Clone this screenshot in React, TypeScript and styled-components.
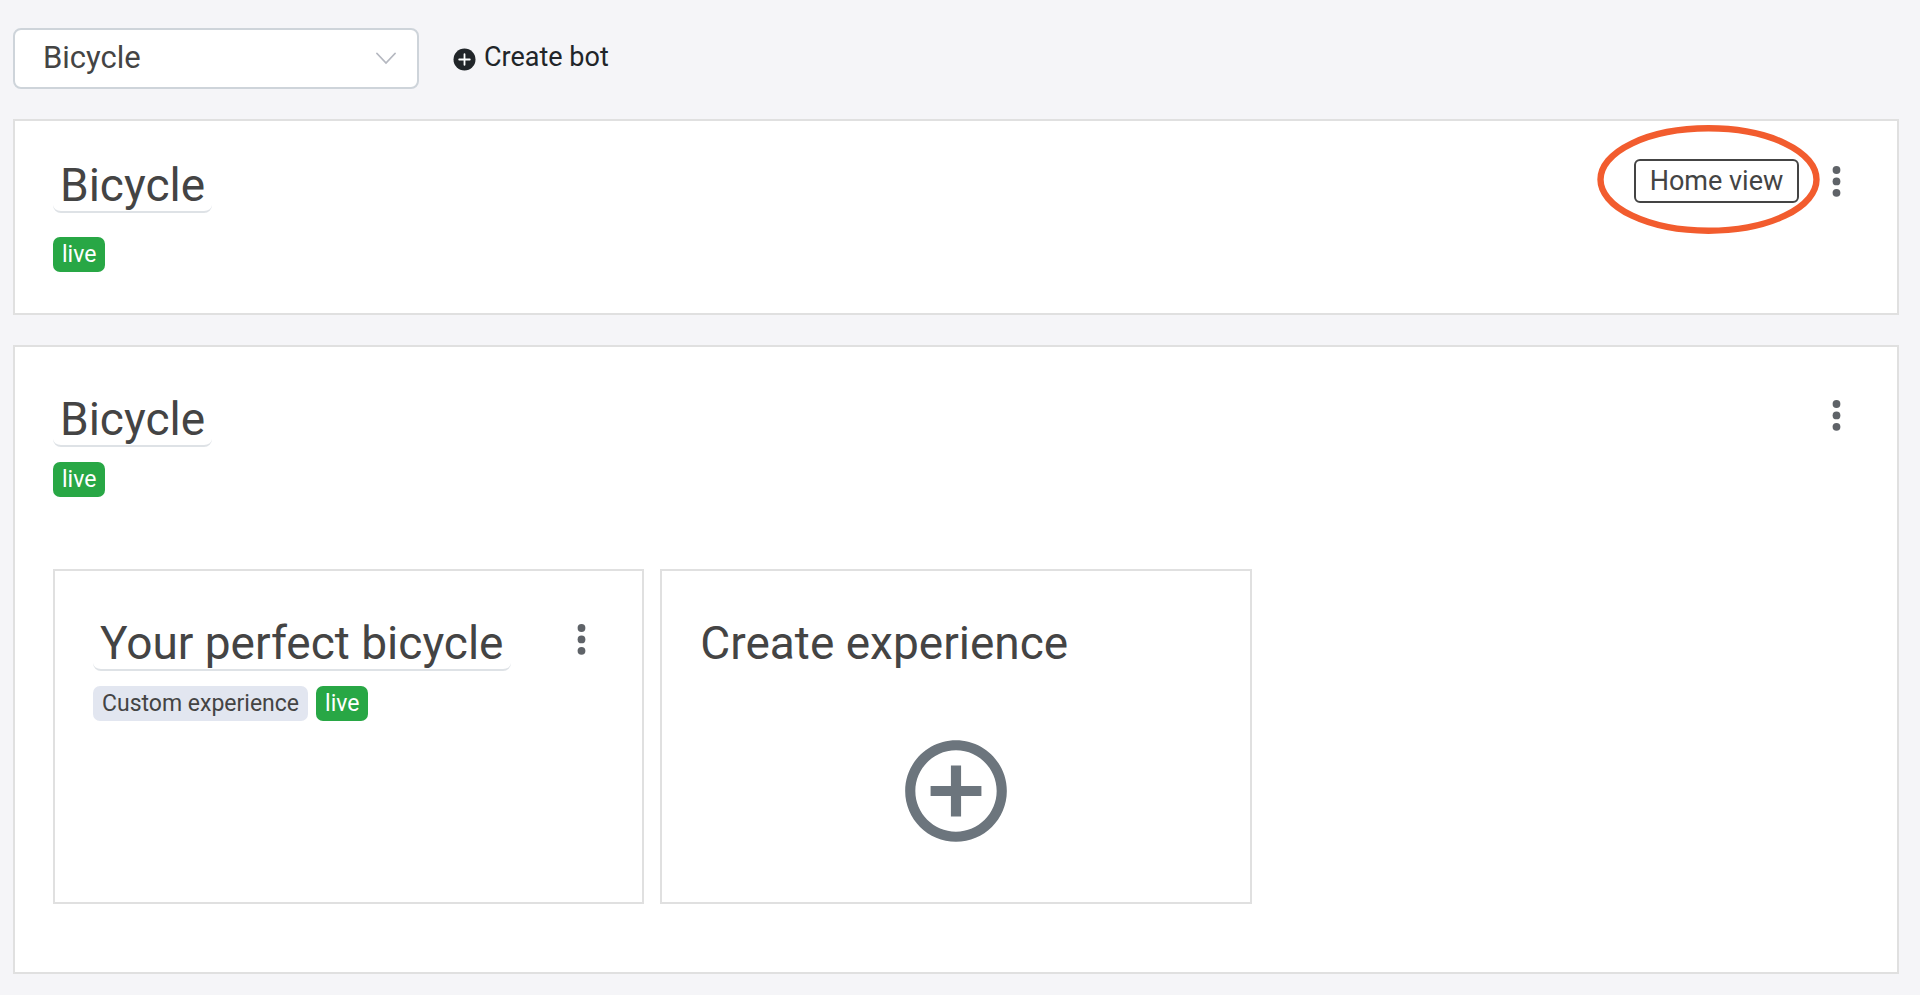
import React from "react";
import styled, { createGlobalStyle } from "styled-components";
import { MdAddCircleOutline } from "react-icons/md";

const GlobalStyle = createGlobalStyle`
  *, *::before, *::after { box-sizing: border-box; }
  body {
    margin: 0;
    background: #f5f5f8;
    color: #444;
    font-family: Roboto, "Liberation Sans", sans-serif;
  }
  button, select { font-family: inherit; }
  h2, h3 { margin: 0; }
`;

const Page = styled.main`
  padding: 28px 21px 20px 13px;
`;

const Toolbar = styled.div`
  display: flex;
  align-items: center;
  gap: 34px;
  margin-bottom: 30px;
`;

const SelectWrap = styled.div`
  display: grid;
  align-items: center;
  width: 406px;
  color: #b5b8c0;

  > * { grid-area: 1 / 1; }
  > svg {
    justify-self: end;
    margin-right: 23px;
    pointer-events: none;
  }
`;

const BotSelect = styled.select`
  appearance: none;
  width: 100%;
  height: 61px;
  padding: 0 60px 2px 28px;
  border: 2px solid #ced4da;
  border-radius: 8px;
  background: #fff;
  color: #444;
  font-size: 31px;
`;

const CreateBot = styled.button`
  display: flex;
  align-items: center;
  gap: 8px;
  padding: 0 0 3px;
  border: 0;
  background: none;
  color: #212529;
  font-size: 27px;
  line-height: 36px;
  cursor: pointer;

  svg { margin-top: 4px; }
`;

const Card = styled.section<{ $compact?: boolean }>`
  border: 2px solid #e0e0e0;
  background: #fff;
  padding: ${(p) => (p.$compact ? "38px 38px 41px" : "46px 38px 68px")};

  & + & { margin-top: 30px; }
`;

const CardHeader = styled.div<{ $gap: number }>`
  display: flex;
  justify-content: space-between;
  align-items: flex-start;
  margin-bottom: ${(p) => p.$gap}px;
`;

const Title = styled.h2`
  font-size: 46px;
  line-height: 52px;
  font-weight: 400;
  white-space: nowrap;
`;

const EditableTitle = styled(Title)`
  padding: 0 7px;
  border-bottom: 2px solid #dee2e6;
  border-radius: 8px;
`;

const Actions = styled.div`
  display: flex;
  align-items: center;
  gap: 16px;
`;

const Highlighted = styled.div`
  position: relative;

  > svg {
    position: absolute;
    left: -37px;
    top: -34px;
    pointer-events: none;
  }
`;

const OutlineButton = styled.button`
  display: block;
  width: 165px;
  height: 44px;
  padding: 0;
  border: 2px solid #444;
  border-radius: 6px;
  background: #fff;
  color: #444;
  font-size: 27px;
  line-height: 36px;
  white-space: nowrap;
  cursor: pointer;
`;

const IconButton = styled.button`
  display: flex;
  align-items: center;
  justify-content: center;
  width: 44px;
  height: 44px;
  padding: 2px 0 0;
  border: 0;
  background: none;
  color: #5f6368;
  cursor: pointer;
`;

const Badges = styled.div`
  display: flex;
  gap: 8px;
`;

const Badge = styled.span<{ $tone: "green" | "gray" }>`
  height: 35px;
  padding: 0 9px;
  border-radius: 7px;
  background: ${(p) => (p.$tone === "green" ? "#28a745" : "#e2e6f0")};
  color: ${(p) => (p.$tone === "green" ? "#fff" : "#444")};
  font-size: 23px;
  line-height: 35px;
  white-space: nowrap;
`;

const Experiences = styled.div`
  display: grid;
  grid-template-columns: repeat(3, minmax(0, 1fr));
  gap: 16px;
  margin-top: 72px;
`;

const Experience = styled.article`
  min-height: 335px;
  padding: 46px 38px;
  border: 2px solid #e0e0e0;
`;

const CreateExperience = styled(Experience)`
  display: flex;
  flex-direction: column;
  gap: 61px;
  padding-bottom: 36px;
`;

const AddButton = styled.button`
  display: flex;
  align-self: center;
  padding: 0;
  border: 0;
  background: none;
  color: #6c757d;
  cursor: pointer;
`;

const MoreButton = ({ label }: { label: string }) => (
  <IconButton aria-label={label}>
    <svg width="10" height="32" viewBox="0 0 10 32" fill="currentColor" aria-hidden="true">
      <circle cx="4.5" cy="4" r="3.9" />
      <circle cx="4.5" cy="15.4" r="3.9" />
      <circle cx="4.5" cy="26.8" r="3.9" />
    </svg>
  </IconButton>
);

const LiveBadge = () => <Badge $tone="green">live</Badge>;

export default function App() {
  return (
    <>
      <GlobalStyle />
      <Page>
        <Toolbar>
          <SelectWrap>
            <BotSelect aria-label="Bot" defaultValue="Bicycle">
              <option>Bicycle</option>
            </BotSelect>
            <svg width="20" height="13" viewBox="0 0 20 13" fill="none" stroke="currentColor" strokeWidth="1.8" strokeLinecap="round" aria-hidden="true">
              <path d="M1 1.5 10 11l9-9.5" />
            </svg>
          </SelectWrap>
          <CreateBot>
            <svg width="23" height="23" viewBox="0 0 23 23" aria-hidden="true">
              <circle cx="11.5" cy="11.5" r="11" fill="#212529" />
              <path d="M11.5 6.2v10.6M6.2 11.5h10.6" stroke="#fff" strokeWidth="1.8" strokeLinecap="round" />
            </svg>
            Create bot
          </CreateBot>
        </Toolbar>

        <Card $compact>
          <CardHeader $gap={24}>
            <EditableTitle>Bicycle</EditableTitle>
            <Actions>
              <Highlighted>
                <OutlineButton>Home view</OutlineButton>
                <svg width="223" height="109" viewBox="0 0 223 109" fill="none" aria-hidden="true">
                  <ellipse cx="111.5" cy="54.5" rx="108" ry="51.2" stroke="#f25c2e" strokeWidth="6.4" />
                </svg>
              </Highlighted>
              <MoreButton label="Bot options" />
            </Actions>
          </CardHeader>
          <Badges><LiveBadge /></Badges>
        </Card>

        <Card>
          <CardHeader $gap={15}>
            <EditableTitle>Bicycle</EditableTitle>
            <MoreButton label="Area options" />
          </CardHeader>
          <Badges><LiveBadge /></Badges>

          <Experiences>
            <Experience>
              <CardHeader $gap={15}>
                <EditableTitle as="h3">Your perfect bicycle</EditableTitle>
                <MoreButton label="Experience options" />
              </CardHeader>
              <Badges>
                <Badge $tone="gray">Custom experience</Badge>
                <LiveBadge />
              </Badges>
            </Experience>
            <CreateExperience>
              <Title as="h3">Create experience</Title>
              <AddButton aria-label="Create experience">
                <MdAddCircleOutline size={122} />
              </AddButton>
            </CreateExperience>
          </Experiences>
        </Card>
      </Page>
    </>
  );
}
